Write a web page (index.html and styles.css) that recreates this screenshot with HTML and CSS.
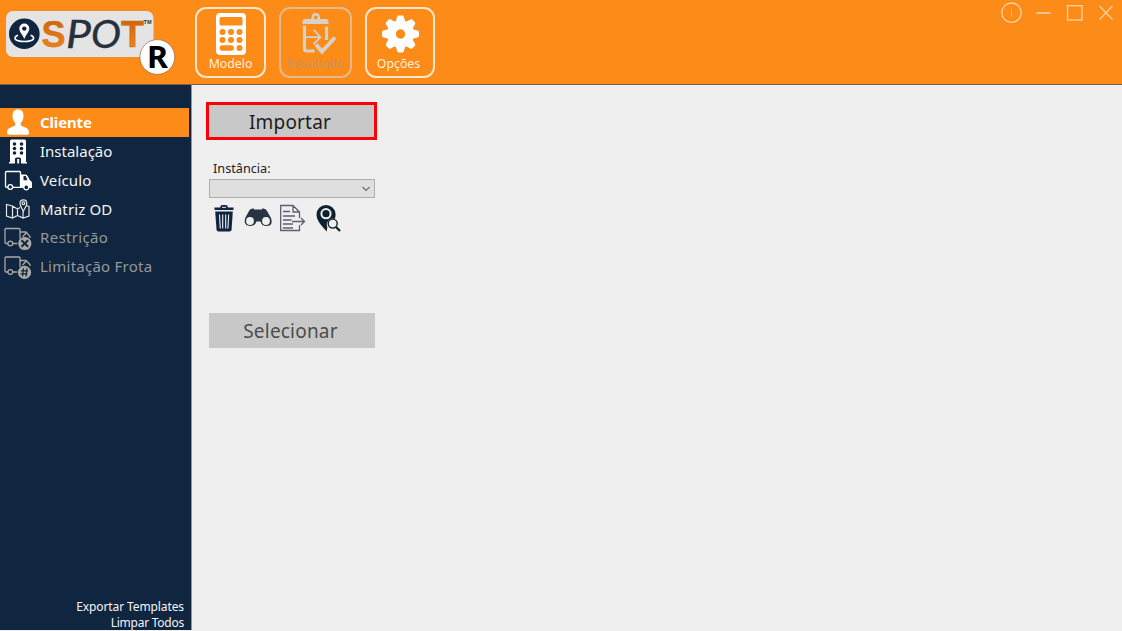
FILE: index.html
```html
<!DOCTYPE html>
<html lang="pt-BR">
<head>
<meta charset="utf-8">
<title>SPOT R</title>
<link rel="stylesheet" href="styles.css">
</head>
<body>
<div class="app">
  <header class="topbar">
    <svg class="logo" width="190" height="84" viewBox="0 0 190 84">
      <defs>
        <linearGradient id="rust" x1="0" y1="0" x2="0" y2="1"><stop offset="0" stop-color="#c95f0b"/><stop offset="1" stop-color="#f58a1d"/></linearGradient>
      </defs>
      <rect x="6" y="11" width="147.500" height="46" rx="7" fill="#e4e4e4"/>
      <circle cx="24.300" cy="33.700" r="15.300" fill="#10253f"/>
      <path d="M18 35.300c-5 1.700-4.500 6.200 6.300 6.200s11.300-4.500 6.300-6.200" fill="none" stroke="#fff" stroke-width="1.600"/>
      <path fill="#fff" fill-rule="evenodd" d="M24.300 39c-1.500-4-5-7-5-10.400a5 5 0 0 1 10 0c0 3.400-3.500 6.400-5 10.400zM24.300 26.400a2.200 2.200 0 1 0 .01 0z"/>
      <text class="logo-heavy" x="41.500" y="47" textLength="24" lengthAdjust="spacingAndGlyphs" fill="url(#rust)">S</text>
      <text class="logo-script" x="66" y="48" textLength="25" lengthAdjust="spacingAndGlyphs">P</text>
      <text class="logo-script" x="91" y="47.500" textLength="30" lengthAdjust="spacingAndGlyphs">O</text>
      <text class="logo-heavy" x="121" y="47" textLength="23" lengthAdjust="spacingAndGlyphs" fill="url(#rust)">T</text>
      <text class="logo-tm" x="143.500" y="23.500" textLength="8" lengthAdjust="spacingAndGlyphs">TM</text>
      <circle cx="157.300" cy="57" r="17.400" fill="#fff" stroke="#94683c" stroke-width=".7"/>
      <text class="logo-r" x="147" y="67.500" textLength="21" lengthAdjust="spacingAndGlyphs">R</text>
    </svg>
    <nav class="tools">
      <button class="tool tool-model">
        <svg width="30" height="42" viewBox="0 0 30 42"><path fill="#fff" fill-rule="evenodd" d="M4 0H26Q30 0 30 4V38Q30 42 26 42H4Q0 42 0 38V4Q0 0 4 0zM5 4Q3.500 4 3.500 5.500V11Q3.500 12.500 5 12.500H25Q26.500 12.500 26.500 11V5.500Q26.500 4 25 4z"/><g fill="#fd8b18"><circle cx="6.500" cy="19" r="3"/><circle cx="15" cy="19" r="3"/><circle cx="23.500" cy="19" r="3"/><circle cx="6.500" cy="27" r="3"/><circle cx="15" cy="27" r="3"/><circle cx="23.500" cy="27" r="3"/><circle cx="23.500" cy="35" r="3"/><rect x="3.600" y="32.200" width="14.300" height="5.600" rx="2.800"/></g></svg>
        <span>Modelo</span>
      </button>
      <button class="tool tool-result" disabled>
        <svg width="36" height="42" viewBox="0 0 36 42"><path d="M4.500 12.500V36q0 2 2 2H14.500M26.500 13.500V27" fill="none" stroke="#d6d1cb" stroke-width="3.200"/><path fill="#d6d1cb" fill-rule="evenodd" d="M2.500 11V9q0-3 3-3H11.500V4.500Q11.500 0 15.700 0T20 4.500V6H25.500q3 0 3 3v2zM15.700 2.600a1.800 1.800 0 1 0 .01 0z"/><path d="M5 24.200H20.500M13.500 16.500 20.500 24.200l-7 7" fill="none" stroke="#d6d1cb" stroke-width="1.800"/><path d="m16 31.500 6 7L35 24.500" fill="none" stroke="#d6d1cb" stroke-width="4"/></svg>
        <span>Resultado</span>
      </button>
      <button class="tool tool-options">
        <svg width="37" height="38" viewBox="0 0 38 38"><g fill="#fff"><circle cx="19" cy="19" r="14"/><g id="cog"><path id="tooth" d="m14 7 1.500-5.500Q16 0 17 0h4q1 0 1.500 1.500L24 7z"/><use href="#tooth" transform="rotate(45 19 19)"/><use href="#tooth" transform="rotate(90 19 19)"/><use href="#tooth" transform="rotate(135 19 19)"/></g><use href="#cog" transform="rotate(180 19 19)"/></g><circle cx="19" cy="19" r="4.800" fill="#fd8b18"/></svg>
        <span>Opções</span>
      </button>
    </nav>
    <svg class="window-controls" width="122" height="30" viewBox="0 0 122 30" fill="none" stroke="#ffd3a3" stroke-width="1.300"><circle cx="11.500" cy="12.700" r="9.700"/><path d="M11.500 10.500V17M11.500 7.500V9" stroke-width="1" opacity=".65"/><path d="M36.500 13H50.500" stroke-width="1.700"/><rect x="67.500" y="5.700" width="14.500" height="14.300"/><path d="m99.500 6 13 13.500M112.500 6l-13 13.500"/></svg>
  </header>

  <div class="workspace">
    <aside class="sidebar">
      <ul class="menu">
        <li class="item active"><svg width="36" height="29" viewBox="0 0 36 29"><path fill="#fff" d="M18 1.500c4 0 5.500 2.500 5.500 6.500 0 3-1.200 5.500-2.800 7v2c1 2 8 2 8.300 7v1.500q0 1.300-3 1.300H10q-3 0-3-1.300V24c.3-5 7.300-5 8.300-7v-2c-1.600-1.500-2.800-4-2.800-7 0-4 1.500-6.500 5.500-6.500z"/></svg><span>Cliente</span></li>
        <li class="item installation"><svg width="36" height="29" viewBox="0 0 36 29"><path fill="#fff" d="M11.500 2.500h13q1.500 0 1.500 1.500V25h1v1.500H21V22q0-1.500-1.500-1.500h-3Q15 20.500 15 22v4.500H9V25h1V4q0-1.500 1.500-1.500z"/><path fill="#fff" d="M17.200 22h2v4.500h-2z"/><g fill="#10253f"><circle cx="14.500" cy="7" r="1.800"/><circle cx="21.500" cy="7" r="1.800"/><circle cx="14.500" cy="11.500" r="1.800"/><circle cx="21.500" cy="11.500" r="1.800"/><circle cx="14.500" cy="16" r="1.800"/><circle cx="21.500" cy="16" r="1.800"/></g></svg><span>Instalação</span></li>
        <li class="item vehicle"><svg width="36" height="29" viewBox="0 0 36 29"><g fill="none" stroke="#fff" stroke-width="1.300"><path d="M8 21.300H6.500q-1 0-1-1V6.500q0-1 1-1h13q1 0 1 1v14.800H12.500"/><circle cx="10.300" cy="21" r="2.400"/></g><path fill="#fff" fill-rule="evenodd" d="M20.500 8.500h5q1.500 0 2.300 1.700l2 4 1.200.8q1 .8 1 2v5h-11.500zM23.500 10v4.200H27.500l-1.700-4.200z"/><circle cx="26.300" cy="21.300" r="2.500" fill="#10253f" stroke="#fff" stroke-width="1.300"/></svg><span>Veículo</span></li>
        <li class="item matrix"><svg width="36" height="29" viewBox="0 0 36 29" fill="none" stroke="#e5e5e5" stroke-width="1.200"><path d="M20 13.500 17.500 15l-5-3-6-1.500V22l6 2 5-2.500 5.500 2.500 6-2V12.500l-2-.7M12.500 12v12M17.500 15v6.500M23 18v6"/><path d="M23.300 17.500c-1-3-3.300-5-3.300-8.200a3.400 3.400 0 0 1 6.800 0c0 3.200-2.500 5.200-3.500 8.200z"/><circle cx="23.400" cy="9.300" r="1.400"/></svg><span>Matriz OD</span></li>
        <li class="item off"><svg width="36" height="29" viewBox="0 0 36 29"><g fill="none" stroke="#aaa9a5" stroke-width="1.300"><path d="M8 20.500H6q-1 0-1-1V6.500q0-1 1-1h13q1 0 1 1v9.500M12.800 20.500h4.500M20.500 9H26l4 4.500V15M22.500 14 26 10"/><circle cx="10.300" cy="20.500" r="2.400"/></g><circle cx="24.800" cy="20.500" r="6.600" fill="#aaa9a5"/><path d="m21.500 17.200 6.600 6.600m0-6.600-6.600 6.600" stroke="#10253f" stroke-width="2"/></svg><span>Restrição</span></li>
        <li class="item off"><svg width="36" height="29" viewBox="0 0 36 29"><g fill="none" stroke="#aaa9a5" stroke-width="1.300"><path d="M8 20H6q-1 0-1-1V6q0-1 1-1h13q1 0 1 1v9M12.800 20h4.500M20.500 8.500H26l4 4V14M22.500 13 26 9.500"/><circle cx="10.300" cy="20" r="2.400"/></g><circle cx="24.500" cy="20.400" r="6.600" fill="#aaa9a5"/><path d="m23.500 16.400-1 8m4.500-8-1 8m-5-5.500h7m-7.500 3h7" stroke="#10253f" stroke-width="1.200"/></svg><span class="fleet">Limitação Frota</span></li>
      </ul>
      <div class="links"><span>Exportar Templates</span><span class="clear">Limpar Todos</span></div>
    </aside>

    <main class="content">
      <button class="action import"><span>Importar</span></button>
      <label class="label">Instância:</label>
      <div class="select"><svg width="10" height="6" viewBox="0 0 10 6"><path d="m1.500 1 3.500 3.500L8.500 1" fill="none" stroke="#707070" stroke-width="1.200"/></svg></div>
      <svg class="actions" width="140" height="30" viewBox="0 0 140 30">
        <g fill="#10253f"><path d="M5.500 6h19V3.500h-5.700V3q0-2-2-2h-3.500q-2 0-2 2v.500H5.500z"/><path d="M6.200 7.500H23.800l-1.200 18q-.2 2-2 2H9.500q-1.800 0-2-2z"/></g><path d="M13 3.200h4M10.500 10.500l.8 14M13.700 10.500v14M16.700 10.500v14M19.700 10.500l-.8 14" stroke="#efefef" stroke-width="1.100"/>
        <path fill="#293443" d="M40 7q1-3 5-2.500v1h8v-1q4-.5 5 2.500l4 7q2.500 8-4.500 8-5 0-6-4.500h-4Q46 22 41 22q-7 0-4.800-8z"/><circle cx="41" cy="17" r="3.900" fill="#efefef"/><circle cx="57" cy="17" r="3.900" fill="#efefef"/>
        <g fill="none" stroke="#625d70" stroke-width="1.300"><path d="M90.500 14V8L84 1.500H71.700v25H90.500V21M84 1.500V8H90.500M74 7.500h7M74 12h12M74 16h8.500M74 20h10M74 24h10M83 17.500h12M92 14l3.500 3.500L92 21"/></g>
        <path fill="#0c2030" d="M117 1a9.600 9.600 0 0 1 9.600 9.600c0 1.500-.3 3-.8 4.400a6 6 0 0 0-7.500 8l-.5 4.500C113.500 23 107.500 17 107.500 10.600A9.600 9.600 0 0 1 117 1z"/><circle cx="117" cy="9.700" r="4.600" fill="#0c2030" stroke="#efefef" stroke-width="2"/><circle cx="123.700" cy="19.600" r="4.500" fill="#efefef" stroke="#0c2030" stroke-width="1.400"/><path d="m127 23 4 4" stroke="#0c2030" stroke-width="2.300"/>
      </svg>
      <button class="action choose" disabled><span>Selecionar</span></button>
    </main>
  </div>
</div>
</body>
</html>
```
FILE: styles.css
```css
* { box-sizing: border-box; }
body { margin: 0; font-family: "Noto Sans", "Open Sans", sans-serif; }
button { font-family: inherit; padding: 0; border: 0; }
.app { width: 1122px; height: 631px; display: flex; flex-direction: column; overflow: hidden; background: #efefef; }
.topbar { height: 85px; flex: none; display: flex; background: #fd8b18; border-bottom: 1px solid #806044; }
.logo { flex: none; }
.logo-heavy { font: bold 36px "Liberation Sans", sans-serif; stroke: #d96f12; stroke-width: .5px; }
.logo-script { font: italic 38px Lato, sans-serif; fill: #27313e; stroke: #27313e; stroke-width: .4px; }
.logo-tm { font: bold 6px "Liberation Sans", sans-serif; fill: #333; }
.logo-r { font: bold 30px "Noto Sans", sans-serif; fill: #000; }
.tools { display: flex; padding: 7px 0 0 5px; }
.tool { height: 71px; display: flex; flex-direction: column; align-items: center; padding-top: 4px; background: transparent; border: 2px solid #ffe6cc; border-radius: 11px; font-size: 12.300px; line-height: 16px; color: #fff0df; }
.tool svg { display: block; flex: none; }
.tool-model { width: 71px; }
.tool-result { width: 73px; margin: 0 13px; border-color: #e2ba8e; color: #c79460; }
.tool-result svg { margin-left: 5px; }
.tool-options { width: 70px; padding-top: 6px; }
.tool-options svg { margin-bottom: 2px; }
.tool-options span { margin-right: 3px; }
.tool span { margin-top: 1px; white-space: nowrap; }
.window-controls { margin-left: auto; }
.workspace { flex: 1; display: flex; min-height: 0; }
.sidebar { width: 192px; flex: none; height: 545px; display: flex; flex-direction: column; background: #10253f; border-right: 1px solid #8997a8; color: #f5f5f5; }
.menu { list-style: none; margin: 0; padding: 23px 2px 0 0; }
.item { height: 28.800px; display: flex; align-items: center; font-size: 15px; line-height: 20px; }
.item svg { flex: none; margin-right: 4px; }
.item span { white-space: nowrap; padding-bottom: 1px; }
.vehicle span, .matrix span { padding-bottom: 0; letter-spacing: .15px; }
.active { background: #fd8b18; font-weight: bold; color: #fff; letter-spacing: -.15px; }
.off { color: #96989b; letter-spacing: .35px; }
.off .fleet { letter-spacing: .25px; }
.links { margin-top: auto; display: flex; flex-direction: column; align-items: flex-end; padding-right: 7px; margin-bottom: -1px; font-size: 12px; line-height: 16px; letter-spacing: -.1px; }
.clear { letter-spacing: -.25px; }
.content { flex: 1; display: flex; flex-direction: column; align-items: flex-start; padding: 17px 0 0 14px; }
.action { display: flex; align-items: center; justify-content: center; font-size: 19px; line-height: 24px; letter-spacing: .2px; background: #c8c8c8; color: #1d1d1d; }
.action span { margin-right: 3px; }
.import { width: 171px; height: 38px; padding-top: 1px; border: 3px solid #fb0007; }
.label { margin: 19px 0 0 7px; font-size: 12.700px; line-height: 18px; color: #222; }
.select { margin: 2px 0 0 3px; width: 166px; height: 19px; border: 1px solid #adadad; background: #dfdfdf; display: flex; align-items: center; justify-content: flex-end; padding-right: 3px; }
.actions { margin: 6px 0 0 3px; }
.choose { margin: 79px 0 0 3px; width: 166px; height: 35px; color: #4c4c4c; }
```
